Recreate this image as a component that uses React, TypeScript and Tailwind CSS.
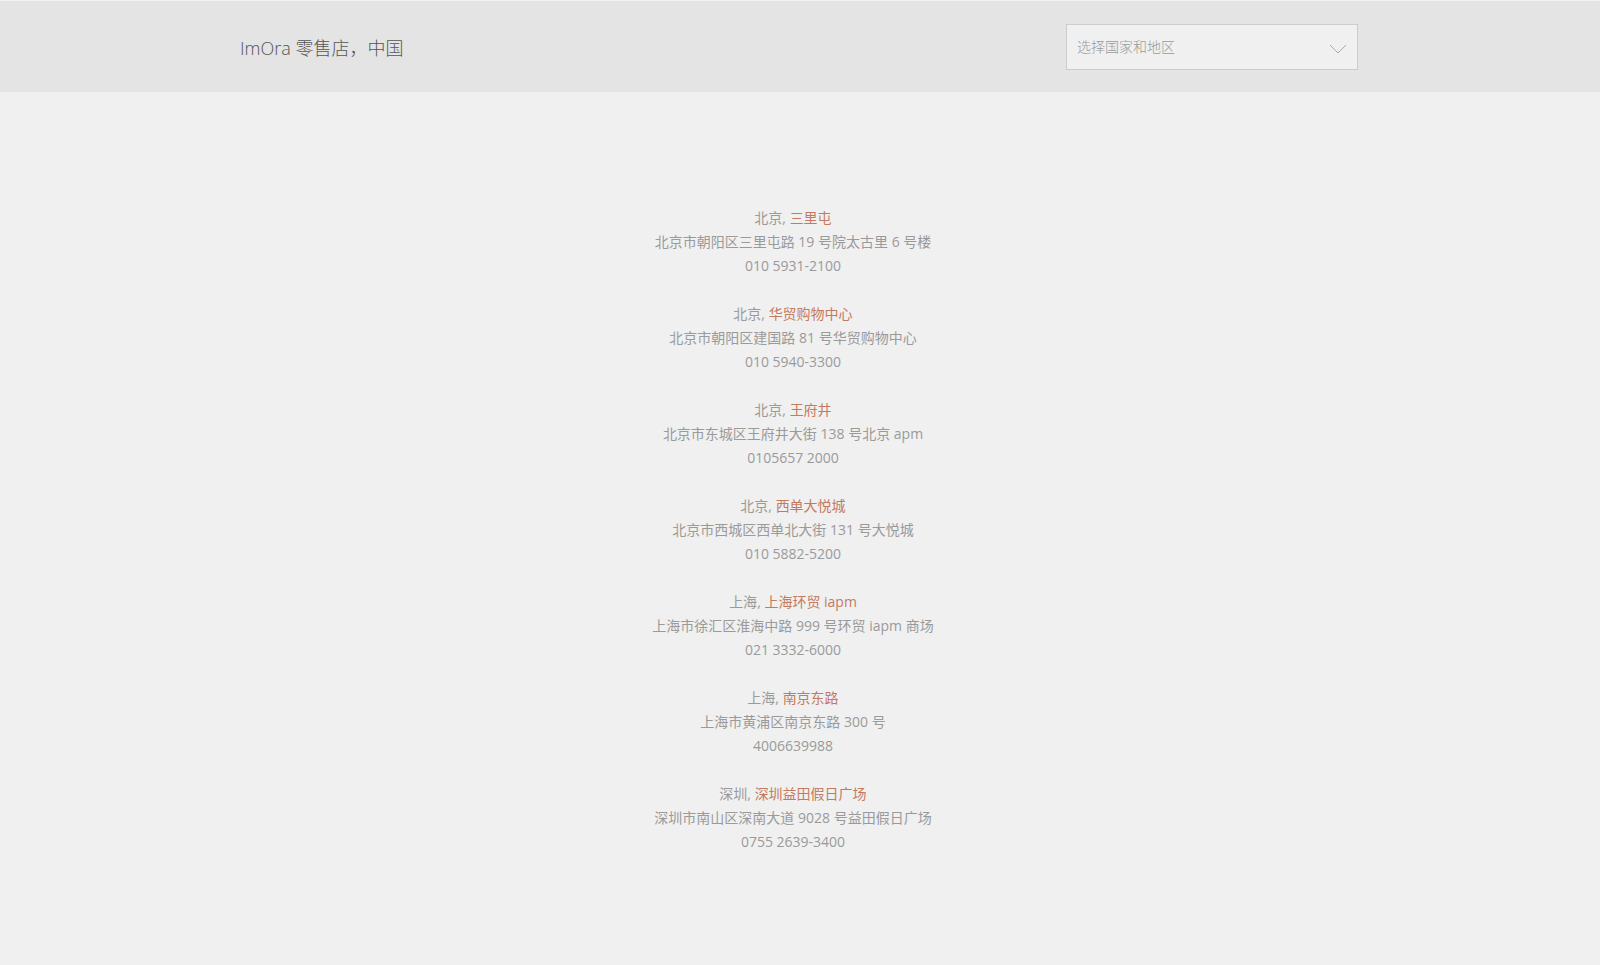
import React from 'react';

const stores = [
  { city: '北京', name: '三里屯', address: '北京市朝阳区三里屯路 19 号院太古里 6 号楼', phone: '010 5931-2100' },
  { city: '北京', name: '华贸购物中心', address: '北京市朝阳区建国路 81 号华贸购物中心', phone: '010 5940-3300' },
  { city: '北京', name: '王府井', address: '北京市东城区王府井大街 138 号北京 apm', phone: '0105657 2000' },
  { city: '北京', name: '西单大悦城', address: '北京市西城区西单北大街 131 号大悦城', phone: '010 5882-5200' },
  { city: '上海', name: '上海环贸 iapm', address: '上海市徐汇区淮海中路 999 号环贸 iapm 商场', phone: '021 3332-6000' },
  { city: '上海', name: '南京东路', address: '上海市黄浦区南京东路 300 号', phone: '4006639988' },
  { city: '深圳', name: '深圳益田假日广场', address: '深圳市南山区深南大道 9028 号益田假日广场', phone: '0755 2639-3400' },
];

export default function App() {
  return (
    <div className="min-h-[965px] bg-[#f0f0f0] font-['Open_Sans','Noto_Sans_CJK_SC',sans-serif]">
      {/* Header */}
      <header className="border-t border-[#f2f2f2] bg-[#e4e4e4]">
        <div className="mx-auto flex h-[91px] w-[1120px] items-center justify-between pr-[2px]">
          <h1 className="pt-[4px] text-[18px] font-light text-[#555]">ImOra 零售店，中国</h1>
          <button className="flex h-[46px] w-[292px] items-center justify-between border border-[#cccccc] bg-[#f0f0f0] pl-[10px] pr-[10px] text-[14px] text-[#999]">
            <span className="font-light">选择国家和地区</span>
            <svg width="18" height="10" viewBox="0 0 18 10" fill="none" className="mt-[5px]">
              <path d="M1 1 L9 9 L17 1" stroke="#a8a8a8" strokeWidth="1" />
            </svg>
          </button>
        </div>
      </header>

      {/* Store list */}
      <main className="flex flex-col items-center gap-6 pt-[114px] pb-[100px] pr-[14px] text-center text-[14px] leading-6 text-[#9a9a9a]">
        {stores.map((s) => (
          <div key={s.name} className="flex flex-col">
            <p>
              {s.city}, <span className="text-[#c47a5e]">{s.name}</span>
            </p>
            <p>{s.address}</p>
            <p>{s.phone}</p>
          </div>
        ))}
      </main>
    </div>
  );
}
